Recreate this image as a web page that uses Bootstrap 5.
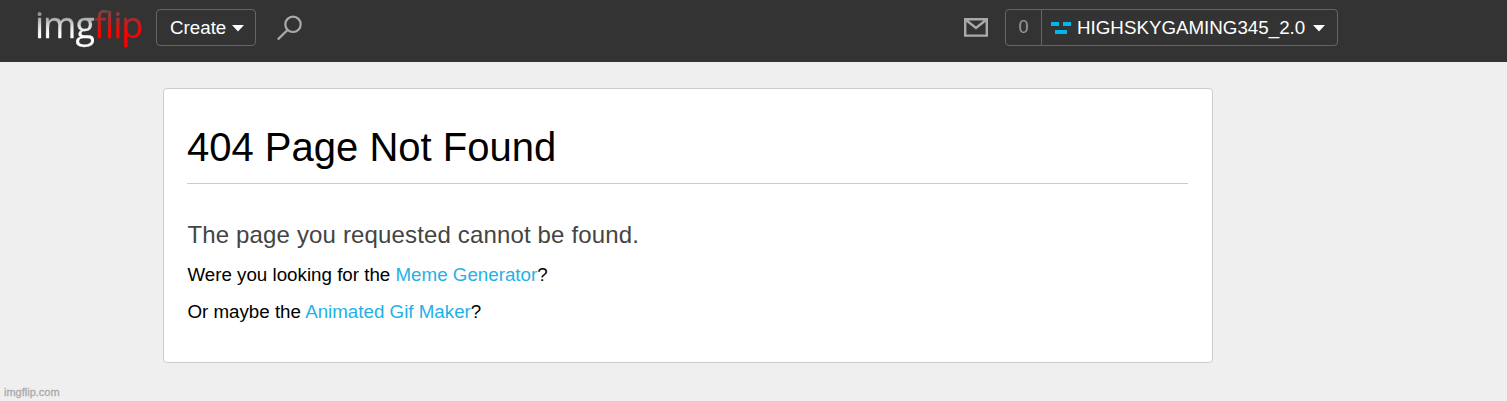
<!DOCTYPE html>
<html lang="en">
<head>
<meta charset="utf-8">
<meta name="viewport" content="width=device-width, initial-scale=1">
<title>404 Page Not Found - Imgflip</title>
<link href="https://cdn.jsdelivr.net/npm/bootstrap@5.3.0/dist/css/bootstrap.min.css" rel="stylesheet">
<style>
body { font-family: "Liberation Sans", Arial, sans-serif; background: #efefef; color: #000; height: 401px; overflow: hidden; }
.topbar { height: 62px; background: #333; padding: 9px 169px 0 35px; }
.logo { width: 121px; height: 53px; margin-top: -11px; font: 36px/53px "Open Sans", sans-serif; letter-spacing: -1px; white-space: nowrap; text-decoration: none; }
.logo span { display: inline-block; color: transparent; background-clip: text; -webkit-background-clip: text; }
.logo .white-part { background-image: linear-gradient(#777 12px, #ddd 28px, #fff 36px); -webkit-text-stroke: .3px transparent; }
.logo .red-part { background-image: linear-gradient(#714848 12px, #c81c1c 26px, #f00 34px); -webkit-text-stroke: .3px transparent; }
.box { height: 37px; border: 1px solid #666; border-radius: 4px; color: #fff; font-size: 18.75px; line-height: 35px; padding: 0; }
.create { width: 100px; padding-left: 13px; }
.count { width: 36px; height: 35px; border-right: 1px solid #666; color: #999; font-size: 18px; line-height: 34px; }
.user { width: 333px; }
.find { margin: 5px 0 0 20px; }
.mail { margin: 9px 17px 0 0; }
.panel { width: 1050px; height: 275px; margin: 26px 0 0 163px; padding: 34px 24px 0 23px; border: 1px solid #ccc; border-radius: 4px; background: #fff; }
.panel h1 { font-size: 40px; line-height: 48px; height: 61px; margin: 0 0 36px; border-bottom: 1px solid #ccc; }
.panel h2 { font-size: 24px; letter-spacing: .15px; line-height: 30px; margin: 0 0 12px .5px; color: #444; }
.panel p { font-size: 18.75px; line-height: 25px; margin: 0 0 12px .4px; }
.panel a { color: #1fb2e7; text-decoration: none; }
.site-tag { font-size: 11px; line-height: 14px; margin: 22px 0 0 4px; color: #aaa; -webkit-text-stroke: .3px #aaa; }
</style>
</head>
<body>
<header class="topbar d-flex align-items-start">
  <a class="logo" href="#"><span class="white-part">img</span><span class="red-part">flip</span></a>
  <button class="box create btn d-flex align-items-center" type="button"><span class="create-text">Create</span>
    <svg width="14" height="8" viewBox="0 0 14 8" style="margin-left:5px"><path d="M1 1h12L7 7.5z" fill="#fff"/></svg></button>
  <svg class="find" width="28" height="28" viewBox="0 0 28 28" fill="none" stroke="#aaa" stroke-width="2.2"><circle cx="17" cy="10.3" r="7.7"/><path d="M11.5 16 1.8 25.5" stroke-width="2.4"/></svg>
  <svg class="mail ms-auto" width="24" height="19" viewBox="0 0 24 19" fill="none" stroke="#aaa" stroke-width="2.4"><path d="M1.2 1.3h21.6v16.3H1.2zM2 2l10 8L22 2"/></svg>
  <div class="box user d-flex">
    <span class="count text-center">0</span>
    <a class="d-flex align-items-center text-white text-decoration-none" href="#">
      <svg class="user-icon" width="20" height="12" viewBox="0 0 20 12" shape-rendering="crispEdges" style="margin:0 6px 0 9px"><path d="M0 0h8v4H0zM12 0h8v4h-8zM4 8h12v4H4z" fill="#00b7eb"/></svg>
      <span class="user-name">HIGHSKYGAMING345_2.0</span>
      <svg width="14" height="8" viewBox="0 0 14 8" style="margin-left:7px"><path d="M1 1h12L7 7.5z" fill="#fff"/></svg>
    </a>
  </div>
</header>
<main class="panel">
  <h1 class="fw-normal">404 Page Not Found</h1>
  <h2 class="fw-normal">The page you requested cannot be found.</h2>
  <p>Were you looking for the <a href="#">Meme Generator</a>?</p>
  <p>Or maybe the <a href="#">Animated Gif Maker</a>?</p>
</main>
<footer class="site-tag">imgflip.com</footer>
</body>
</html>
